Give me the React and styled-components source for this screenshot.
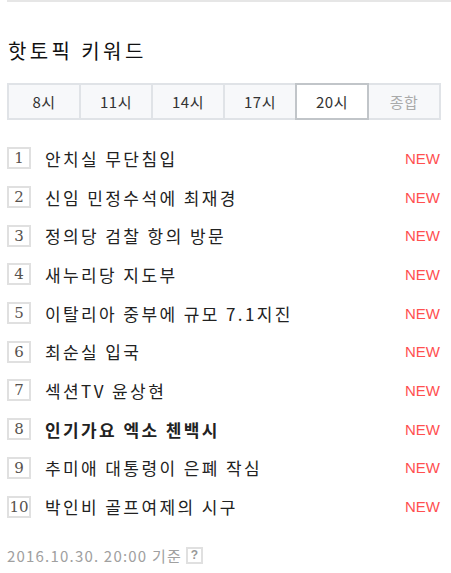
import React from "react";
import styled, { createGlobalStyle } from "styled-components";

const GlobalStyle = createGlobalStyle`
  body {
    margin: 0;
    background: #fff;
    font-family: "Noto Sans CJK KR", "Noto Sans", sans-serif;
  }
`;

const tabs = ["8시", "11시", "14시", "17시", "20시", "종합"];

const keywords = [
  { text: "안치실 무단침입", isNew: true },
  { text: "신임 민정수석에 최재경", isNew: true },
  { text: "정의당 검찰 항의 방문", isNew: true },
  { text: "새누리당 지도부", isNew: true },
  { text: "이탈리아 중부에 규모 7.1지진", isNew: true },
  { text: "최순실 입국", isNew: true },
  { text: "섹션TV 윤상현", isNew: true },
  { text: "인기가요 엑소 첸백시", isNew: true, bold: true },
  { text: "추미애 대통령이 은폐 작심", isNew: true },
  { text: "박인비 골프여제의 시구", isNew: true },
];

const Wrap = styled.div`
  padding-left: 7px;
  width: 444px;
`;

const TopLine = styled.div`
  height: 2px;
  background: #e6e6e6;
`;

const Title = styled.h2`
  margin: 34px 0 0 1px;
  font-size: 20px;
  font-weight: normal;
  color: #111;
  letter-spacing: 3.4px;
  line-height: 30px;
`;

const TabBar = styled.div`
  display: flex;
  margin-top: 17px;
  width: 434px;
`;

const Tab = styled.div`
  flex: 1;
  height: 37px;
  box-sizing: border-box;
  display: flex;
  align-items: center;
  justify-content: center;
  border: 2px solid ${(p) => (p.$active ? "#c1c5c9" : "#e0e3e7")};
  margin-left: ${(p) => (p.$first ? "0" : "-2px")};
  position: relative;
  z-index: ${(p) => (p.$active ? 1 : 0)};
  background: ${(p) => (p.$active ? "#fff" : "#f7f8fa")};
  color: ${(p) => (p.$muted ? "#aaa" : "#333")};
  font-size: 15px;
  letter-spacing: 0.5px;
`;

const List = styled.ol`
  list-style: none;
  margin: 19px 0 0;
  padding: 0;
`;

const Row = styled.li`
  display: flex;
  align-items: center;
  height: 38.7px;
`;

const Num = styled.span`
  width: 24px;
  height: 22px;
  box-sizing: border-box;
  border: 2px solid #e0e0e0;
  display: flex;
  align-items: center;
  justify-content: center;
  font-family: "DejaVu Serif", "Liberation Serif", serif;
  font-size: 15px;
  color: #57524e;
  flex-shrink: 0;
`;

const Keyword = styled.span`
  margin-left: 14px;
  font-size: 17px;
  letter-spacing: 2.4px;
  color: #222;
  font-weight: ${(p) => (p.$bold ? "bold" : "normal")};
  flex: 1;
`;

const NewMark = styled.span`
  font-family: "Liberation Sans", Arial, sans-serif;
  font-size: 15px;
  color: #ff5050;
  margin-right: 11px;
`;

const Footer = styled.div`
  display: flex;
  align-items: center;
  margin-top: 19px;
  color: #a0a0a0;
  font-size: 15px;
  letter-spacing: 1.2px;
  gap: 4px;
`;

const Help = styled.span`
  width: 17px;
  height: 17px;
  box-sizing: border-box;
  border: 2px solid #e0e0e0;
  display: inline-flex;
  align-items: center;
  justify-content: center;
  font-family: "Liberation Sans", Arial, sans-serif;
  font-size: 12px;
  font-weight: bold;
  color: #999;
  letter-spacing: 0;
`;

export default function App() {
  return (
    <>
      <GlobalStyle />
      <Wrap>
        <TopLine />
        <Title>핫토픽 키워드</Title>
        <TabBar>
          {tabs.map((t, i) => (
            <Tab key={t} $first={i === 0} $active={t === "20시"} $muted={t === "종합"}>
              {t}
            </Tab>
          ))}
        </TabBar>
        <List>
          {keywords.map((k, i) => (
            <Row key={k.text}>
              <Num>{i + 1}</Num>
              <Keyword $bold={k.bold}>{k.text}</Keyword>
              {k.isNew && <NewMark>NEW</NewMark>}
            </Row>
          ))}
        </List>
        <Footer>
          2016.10.30. 20:00 기준 <Help>?</Help>
        </Footer>
      </Wrap>
    </>
  );
}
